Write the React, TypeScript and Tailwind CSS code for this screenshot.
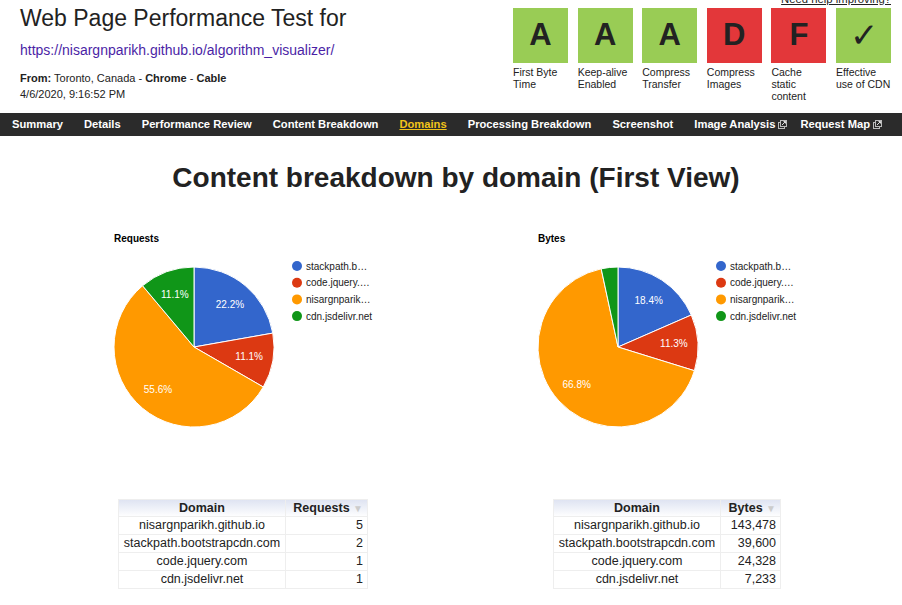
const grades = [
  { grade: "A", label: ["First Byte", "Time"], ok: true },
  { grade: "A", label: ["Keep-alive", "Enabled"], ok: true },
  { grade: "A", label: ["Compress", "Transfer"], ok: true },
  { grade: "D", label: ["Compress", "Images"], ok: false },
  { grade: "F", label: ["Cache", "static", "content"], ok: false },
  { grade: "✓", label: ["Effective", "use of CDN"], ok: true },
];

const navItems = [
  { name: "Summary" },
  { name: "Details" },
  { name: "Performance Review" },
  { name: "Content Breakdown" },
  { name: "Domains", active: true },
  { name: "Processing Breakdown" },
  { name: "Screenshot" },
  { name: "Image Analysis", external: true },
  { name: "Request Map", external: true },
];

const colors = ["#3366cc", "#dc3912", "#ff9900", "#109618"];
const legend = ["stackpath.b…", "code.jquery.…", "nisargnparik…", "cdn.jsdelivr.net"];

const charts = [
  {
    title: "Requests",
    values: [2, 1, 5, 1],
    labels: ["22.2%", "11.1%", "55.6%", "11.1%"],
    column: "Requests",
    rows: [
      ["nisargnparikh.github.io", "5"],
      ["stackpath.bootstrapcdn.com", "2"],
      ["code.jquery.com", "1"],
      ["cdn.jsdelivr.net", "1"],
    ],
    valueWidth: "w-[82px]",
  },
  {
    title: "Bytes",
    values: [39600, 24328, 143478, 7233],
    labels: ["18.4%", "11.3%", "66.8%", ""],
    column: "Bytes",
    rows: [
      ["nisargnparikh.github.io", "143,478"],
      ["stackpath.bootstrapcdn.com", "39,600"],
      ["code.jquery.com", "24,328"],
      ["cdn.jsdelivr.net", "7,233"],
    ],
    valueWidth: "w-[60px]",
  },
];

const point = (cx: number, cy: number, r: number, t: number) => [
  cx + r * Math.sin(2 * Math.PI * t),
  cy - r * Math.cos(2 * Math.PI * t),
];

const ExternalIcon = () => (
  <svg width="9" height="9" viewBox="0 0 9 9" className="ml-[3px] inline-block">
    <rect x="0.5" y="2.5" width="6" height="6" fill="none" stroke="#bbb" />
    <rect x="2.5" y="0.5" width="6" height="6" fill="#2b2b2b" stroke="#bbb" />
    <path d="M4 5 L7.5 1.5 M5.5 1.5 H7.5 V3.5" stroke="#ddd" fill="none" />
  </svg>
);

const PieChart = ({ chart }: { chart: (typeof charts)[number] }) => {
  const total = chart.values.reduce((a, b) => a + b, 0);
  const cx = 163;
  const cy = 120;
  const r = 80;
  let start = 0;
  return (
    <svg width="424" height="260" className="block font-['Liberation_Sans',Arial,sans-serif]">
      <text x="83" y="15" fontSize="10" fontWeight="bold" fill="#000">
        {chart.title}
      </text>
      {chart.values.map((v, i) => {
        const a0 = start;
        const a1 = start + v / total;
        start = a1;
        const [x0, y0] = point(cx, cy, r, a0);
        const [x1, y1] = point(cx, cy, r, a1);
        const [lx, ly] = point(cx, cy, r * 0.7, (a0 + a1) / 2);
        return (
          <g key={i}>
            <path
              d={`M${cx} ${cy} L${x0} ${y0} A${r} ${r} 0 ${a1 - a0 > 0.5 ? 1 : 0} 1 ${x1} ${y1} Z`}
              fill={colors[i]}
              stroke="#fff"
              strokeWidth="1"
            />
            {chart.labels[i] && (
              <text x={lx} y={ly + 3.5} fontSize="10" fill="#fff" textAnchor="middle">
                {chart.labels[i]}
              </text>
            )}
          </g>
        );
      })}
      {legend.map((name, i) => (
        <g key={name}>
          <circle cx="266" cy={39 + i * 16.7} r="5" fill={colors[i]} />
          <text x="275" y={39 + i * 16.7 + 3.5} fontSize="10" fill="#222">
            {name}
          </text>
        </g>
      ))}
    </svg>
  );
};

const DomainTable = ({ chart }: { chart: (typeof charts)[number] }) => (
  <table className="mx-auto border-collapse text-[12.5px] text-[#222]">
    <thead>
      <tr className="bg-gradient-to-b from-[#dfe4f2] to-white">
        <th className="w-[167px] h-[17px] border border-[#eee] font-bold leading-none">Domain</th>
        <th className={`${chart.valueWidth} border border-[#eee] font-bold leading-none text-right pr-[4px] whitespace-nowrap`}>
          {chart.column} <span className="text-[#ccc] text-[10px]">▼</span>
        </th>
      </tr>
    </thead>
    <tbody>
      {chart.rows.map(([domain, value]) => (
        <tr key={domain}>
          <td className="h-[18px] border border-[#eee] text-center leading-none px-[3px]">{domain}</td>
          <td className="border border-[#eee] text-right leading-none pr-[4px]">{value}</td>
        </tr>
      ))}
    </tbody>
  </table>
);

export default function App() {
  return (
    <div className="w-[902px] h-[605px] overflow-hidden bg-white font-['Liberation_Sans',Arial,sans-serif] text-[#222]">
      <div className="flex justify-between h-[113px]">
        <div className="pl-[20px] pt-[4px]">
          <h1 className="text-[23px] leading-[28px] font-normal text-[#222]">Web Page Performance Test for</h1>
          <a className="block mt-[10px] text-[14px] leading-[16px] text-[#4b1fa6]">
            https://nisargnparikh.github.io/algorithm_visualizer/
          </a>
          <div className="mt-[12px] text-[11px] leading-[16px]">
            <b>From:</b> Toronto, Canada - <b>Chrome</b> - <b>Cable</b>
            <br />
            4/6/2020, 9:16:52 PM
          </div>
        </div>
        <div className="pr-[11px]">
          <div className="text-right text-[11.3px] leading-[12px] mt-[-7px] underline text-[#222]">
            Need help improving?
          </div>
          <div className="flex gap-[9.6px] mt-[3px]">
            {grades.map((g, i) => (
              <div key={i} className="w-[55px]">
                <div
                  className={`h-[55px] flex items-center justify-center text-[#222] ${
                    g.ok ? "bg-[#99cc55]" : "bg-[#e3373a]"
                  } ${g.grade === "✓" ? "text-[34px] font-extralight font-['DejaVu_Sans',sans-serif]" : "text-[31px] font-bold"}`}
                >
                  {g.grade}
                </div>
                <div className="mt-[3px] text-[10.5px] leading-[12px] text-[#222]">
                  {g.label.map((l) => (
                    <div key={l}>{l}</div>
                  ))}
                </div>
              </div>
            ))}
          </div>
        </div>
      </div>

      <nav className="h-[23px] bg-[#2b2b2b] flex items-center gap-[21px] pl-[12px]">
        {navItems.map((item) => (
          <a
            key={item.name}
            className={`text-[11.2px] font-bold flex items-center whitespace-nowrap ${
              item.active ? "text-[#f2c31a] underline" : "text-white"
            } ${item.external ? "mr-[-8px]" : ""}`}
          >
            {item.name}
            {item.external && <ExternalIcon />}
          </a>
        ))}
      </nav>

      <h2 className="mt-[27px] text-center text-[28px] leading-[30px] font-bold text-[#222] pl-[10px]">
        Content breakdown by domain (First View)
      </h2>

      <div className="flex pl-[31px] mt-[34px]">
        {charts.map((chart) => (
          <div key={chart.title} className="w-[424px]">
            <PieChart chart={chart} />
            <div className="mt-[12px]">
              <DomainTable chart={chart} />
            </div>
          </div>
        ))}
      </div>
    </div>
  );
}
